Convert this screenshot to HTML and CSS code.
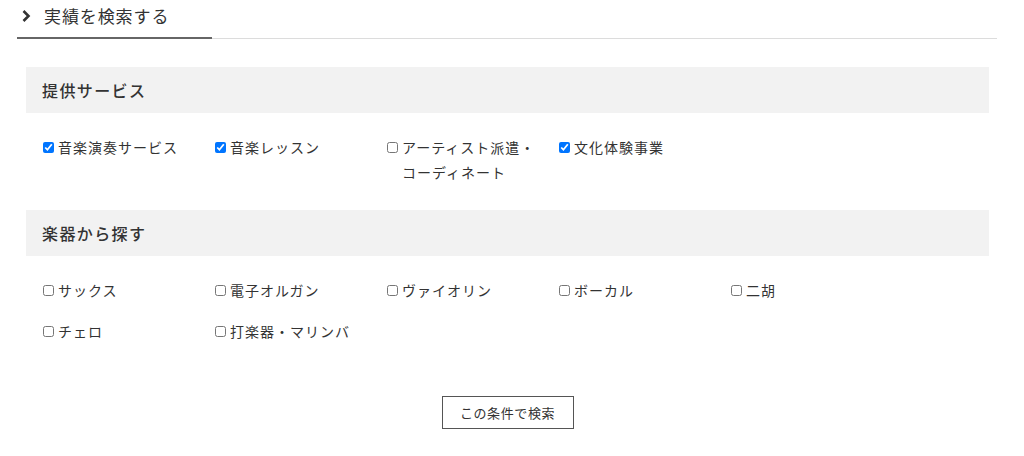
FILE: index.html
```html
<!DOCTYPE html>
<html lang="ja">
<head>
<meta charset="utf-8">
<title>実績を検索する</title>
<link rel="stylesheet" href="styles.css">
</head>
<body>
<div class="wrap">
  <div class="tabbar">
    <div class="tab">
      <svg class="chev" width="11" height="14" viewBox="0 0 11 14"><path d="M2.5 2 L7.5 7 L2.5 12" fill="none" stroke="#333" stroke-width="2.6"/></svg>
      <span class="tab-label">実績を検索する</span>
    </div>
  </div>

  <form class="search">
    <h3 class="section-title">提供サービス</h3>
    <div class="options">
      <label class="opt"><input type="checkbox" checked><span class="txt">音楽演奏サービス</span></label>
      <label class="opt"><input type="checkbox" checked><span class="txt">音楽レッスン</span></label>
      <label class="opt"><input type="checkbox"><span class="txt">アーティスト派遣・コーディネート</span></label>
      <label class="opt"><input type="checkbox" checked><span class="txt">文化体験事業</span></label>
    </div>

    <h3 class="section-title">楽器から探す</h3>
    <div class="options">
      <label class="opt"><input type="checkbox"><span class="txt">サックス</span></label>
      <label class="opt"><input type="checkbox"><span class="txt">電子オルガン</span></label>
      <label class="opt"><input type="checkbox"><span class="txt">ヴァイオリン</span></label>
      <label class="opt"><input type="checkbox"><span class="txt">ボーカル</span></label>
      <label class="opt"><input type="checkbox"><span class="txt">二胡</span></label>
      <label class="opt"><input type="checkbox"><span class="txt">チェロ</span></label>
      <label class="opt"><input type="checkbox"><span class="txt">打楽器・マリンバ</span></label>
    </div>

    <div class="actions">
      <button type="button" class="btn">この条件で検索</button>
    </div>
  </form>
</div>
</body>
</html>
```

FILE: styles.css
```css
html, body {
  margin: 0;
  padding: 0;
  background: #fff;
}
body {
  font-family: "Noto Sans CJK JP", "Noto Sans", sans-serif;
  color: #333;
}
.wrap {
  margin: 0 27px 0 17px;
}
.tabbar {
  border-bottom: 1px solid #dcdcdc;
}
.tab {
  width: 191px;
  display: flex;
  align-items: center;
  padding: 4px 0 9px 4px;
  border-bottom: 2px solid #666;
  margin-bottom: -1px;
}
.chev {
  display: block;
  margin-right: 12px;
}
.tab-label {
  font-size: 17px;
  line-height: 24px;
  letter-spacing: 0.9px;
}
.search {
  margin: 28px 8px 0 9px;
}
.section-title {
  margin: 0;
  background: #f2f2f2;
  height: 46px;
  line-height: 46px;
  padding-left: 16px;
  font-size: 16px;
  font-weight: 500;
  letter-spacing: 1.4px;
  color: #333;
}
.options {
  display: grid;
  grid-template-columns: repeat(5, 172px);
  row-gap: 16px;
  padding: 22px 17px 25px;
}
.opt {
  display: flex;
  align-items: flex-start;
  font-size: 14px;
  line-height: 25px;
  letter-spacing: 1px;
  color: #333;
}
.opt input {
  width: 11px;
  height: 11px;
  margin: 7px 4px 0 0;
  flex: none;
}
.txt {
  width: 140px;
}
.actions {
  display: flex;
  justify-content: center;
  padding-top: 27px;
}
.btn {
  width: 132px;
  height: 33px;
  border: 1px solid #555;
  background: #fff;
  font-family: inherit;
  font-size: 13px;
  letter-spacing: 0.6px;
  color: #333;
  padding: 0;
}
```
